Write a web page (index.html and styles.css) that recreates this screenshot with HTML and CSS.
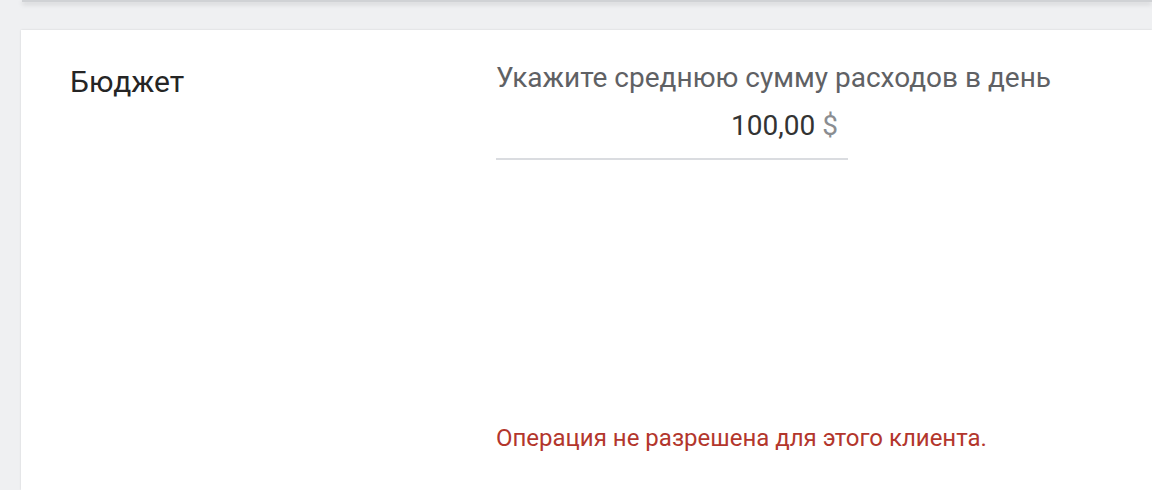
FILE: index.html
```html
<!DOCTYPE html>
<html lang="ru">
<head>
  <meta charset="UTF-8" />
  <title>Бюджет</title>
  <link rel="stylesheet" href="styles.css">
</head>
<body>
  <div class="top-card"></div>

  <div class="card">
    <div class="section-title">Бюджет</div>

    <div class="budget">
      <div class="field-label">Укажите среднюю сумму расходов в день</div>
      <div class="field">
        <span class="amount">100,00</span>
        <span class="currency">$</span>
      </div>

      <div class="error">Операция не разрешена для этого клиента.</div>
    </div>
  </div>
</body>
</html>
```

FILE: styles.css
```css
:root {
  --bg: #eff0f2;
  --card: #ffffff;
  --text: #252525;
  --muted: #5f6164;
  --line: #dadce0;
  --error: #b3362c;
}

* {
  box-sizing: border-box;
}

html {
  overflow: hidden;
}

body {
  margin: 0;
  height: 490px;
  background: var(--bg);
  font-family: Roboto, 'Liberation Sans', sans-serif;
  padding-left: 21px;
}

.top-card {
  height: 2px;
  margin-left: 1px;
  background: #d0d2d5;
  box-shadow: 0 2px 5px rgba(0, 0, 0, 0.2);
}

.card {
  margin-top: 28px;
  background: var(--card);
  height: 460px;
  box-shadow: 0 0 2px rgba(0, 0, 0, 0.12);
  display: flex;
  padding: 32px 0 0 49px;
}

.section-title {
  width: 426px;
  margin-top: 2px;
  font-size: 30px;
  color: var(--text);
  line-height: 36px;
}

.budget {
  display: flex;
  flex-direction: column;
}

.field-label {
  font-size: 28px;
  color: var(--muted);
  line-height: 32px;
  white-space: nowrap;
}

.field {
  width: 352px;
  text-align: right;
  font-size: 28px;
  line-height: 32px;
  padding: 16px 10px 16px 0;
  border-bottom: 2px solid var(--line);
}

.amount {
  color: #333;
}

.currency {
  color: #8a8d91;
}

.error {
  margin-top: 264px;
  font-size: 24px;
  line-height: 28px;
  color: var(--error);
  white-space: nowrap;
}
```
